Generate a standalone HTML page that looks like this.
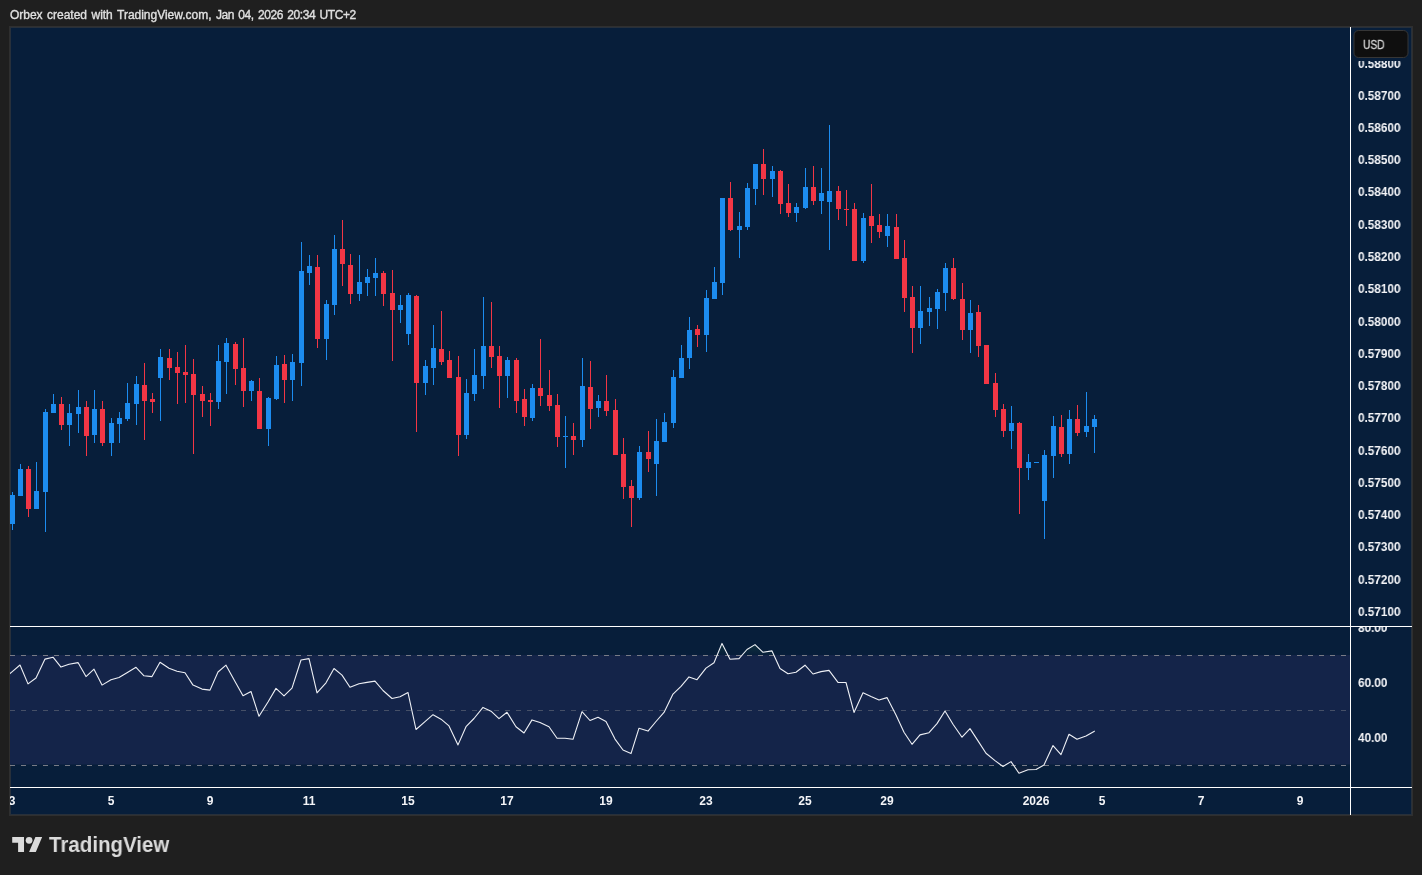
<!DOCTYPE html><html><head><meta charset="utf-8"><title>Chart</title><style>
html,body{margin:0;padding:0}
body{width:1422px;height:875px;background:#1f1f1f;position:relative;overflow:hidden;font-family:"Liberation Sans",sans-serif}
.t{position:absolute;white-space:nowrap;line-height:1;will-change:transform}
.hd{left:10px;top:9px;font-size:12px;color:#e0e0e0;word-spacing:1.2px;letter-spacing:-0.17px;-webkit-text-stroke:0.35px #e0e0e0}
.pl{font-size:13px;font-weight:bold;color:#f4f5f8;transform-origin:0 50%;transform:scaleX(0.905)}
.tl{font-size:12px;font-weight:bold;color:#f4f5f8;top:795px;transform:translateX(-50%)}
.usd{left:1363px;top:39px;font-size:12px;color:#d6d6d6;transform-origin:0 0;transform:scaleX(0.85);-webkit-text-stroke:0.3px #d6d6d6}
.tv{left:49.3px;top:834.9px;font-size:21.5px;font-weight:bold;color:#dbdbdb;transform-origin:0 0;transform:scaleX(0.953)}
.clip{position:absolute;overflow:hidden}

</style></head><body>
<svg width="1422" height="875" viewBox="0 0 1422 875" style="position:absolute;left:0;top:0">
<rect x="9" y="26" width="1404" height="790" fill="#2f2f2f"/>
<rect x="10" y="27" width="1402" height="788" fill="#27303b"/>
<rect x="11" y="28" width="1400" height="786" fill="#071e3a"/>
<rect x="10" y="655" width="1340" height="109.5" fill="#142449"/>
<line x1="10" y1="655.5" x2="1347" y2="655.5" stroke="#787b86" stroke-opacity="1" stroke-width="1" stroke-dasharray="5 6" shape-rendering="crispEdges"/>
<line x1="10" y1="710.5" x2="1347" y2="710.5" stroke="#787b86" stroke-opacity="0.5" stroke-width="1" stroke-dasharray="5 6" shape-rendering="crispEdges"/>
<line x1="10" y1="765.5" x2="1347" y2="765.5" stroke="#787b86" stroke-opacity="1" stroke-width="1" stroke-dasharray="5 6" shape-rendering="crispEdges"/>
<g shape-rendering="crispEdges">
<rect x="12" y="492" width="1" height="38" fill="#1c8cef"/>
<rect x="10" y="495" width="5" height="29" fill="#1c8cef"/>
<rect x="20" y="464" width="1" height="32" fill="#1c8cef"/>
<rect x="18" y="469" width="5" height="27" fill="#1c8cef"/>
<rect x="28" y="466" width="1" height="51" fill="#f23645"/>
<rect x="26" y="469" width="5" height="40" fill="#f23645"/>
<rect x="36" y="462" width="1" height="47" fill="#1c8cef"/>
<rect x="34" y="491" width="5" height="18" fill="#1c8cef"/>
<rect x="45" y="409" width="1" height="123" fill="#1c8cef"/>
<rect x="43" y="412" width="5" height="80" fill="#1c8cef"/>
<rect x="53" y="394" width="1" height="19" fill="#1c8cef"/>
<rect x="51" y="404" width="5" height="9" fill="#1c8cef"/>
<rect x="61" y="397" width="1" height="33" fill="#f23645"/>
<rect x="59" y="404" width="5" height="21" fill="#f23645"/>
<rect x="69" y="404" width="1" height="42" fill="#1c8cef"/>
<rect x="67" y="413" width="5" height="12" fill="#1c8cef"/>
<rect x="78" y="390" width="1" height="43" fill="#1c8cef"/>
<rect x="76" y="407" width="5" height="7" fill="#1c8cef"/>
<rect x="86" y="401" width="1" height="55" fill="#f23645"/>
<rect x="84" y="407" width="5" height="29" fill="#f23645"/>
<rect x="94" y="390" width="1" height="53" fill="#1c8cef"/>
<rect x="92" y="409" width="5" height="26" fill="#1c8cef"/>
<rect x="102" y="401" width="1" height="45" fill="#f23645"/>
<rect x="100" y="409" width="5" height="34" fill="#f23645"/>
<rect x="111" y="418" width="1" height="38" fill="#1c8cef"/>
<rect x="109" y="423" width="5" height="20" fill="#1c8cef"/>
<rect x="119" y="412" width="1" height="31" fill="#1c8cef"/>
<rect x="117" y="418" width="5" height="6" fill="#1c8cef"/>
<rect x="127" y="383" width="1" height="38" fill="#1c8cef"/>
<rect x="125" y="403" width="5" height="16" fill="#1c8cef"/>
<rect x="136" y="376" width="1" height="49" fill="#1c8cef"/>
<rect x="134" y="384" width="5" height="20" fill="#1c8cef"/>
<rect x="144" y="363" width="1" height="77" fill="#f23645"/>
<rect x="142" y="385" width="5" height="16" fill="#f23645"/>
<rect x="152" y="393" width="1" height="20" fill="#f23645"/>
<rect x="150" y="399" width="5" height="3" fill="#f23645"/>
<rect x="160" y="349" width="1" height="72" fill="#1c8cef"/>
<rect x="158" y="357" width="5" height="21" fill="#1c8cef"/>
<rect x="169" y="349" width="1" height="31" fill="#f23645"/>
<rect x="167" y="358" width="5" height="10" fill="#f23645"/>
<rect x="177" y="352" width="1" height="52" fill="#f23645"/>
<rect x="175" y="367" width="5" height="6" fill="#f23645"/>
<rect x="185" y="345" width="1" height="58" fill="#f23645"/>
<rect x="183" y="372" width="5" height="3" fill="#f23645"/>
<rect x="193" y="359" width="1" height="95" fill="#f23645"/>
<rect x="191" y="374" width="5" height="21" fill="#f23645"/>
<rect x="202" y="386" width="1" height="31" fill="#f23645"/>
<rect x="200" y="394" width="5" height="7" fill="#f23645"/>
<rect x="210" y="393" width="1" height="33" fill="#f23645"/>
<rect x="208" y="400" width="5" height="2" fill="#f23645"/>
<rect x="218" y="345" width="1" height="64" fill="#1c8cef"/>
<rect x="216" y="361" width="5" height="41" fill="#1c8cef"/>
<rect x="226" y="338" width="1" height="56" fill="#1c8cef"/>
<rect x="224" y="343" width="5" height="19" fill="#1c8cef"/>
<rect x="235" y="342" width="1" height="43" fill="#f23645"/>
<rect x="233" y="344" width="5" height="25" fill="#f23645"/>
<rect x="243" y="338" width="1" height="69" fill="#f23645"/>
<rect x="241" y="368" width="5" height="23" fill="#f23645"/>
<rect x="251" y="380" width="1" height="21" fill="#1c8cef"/>
<rect x="249" y="381" width="5" height="10" fill="#1c8cef"/>
<rect x="259" y="378" width="1" height="51" fill="#f23645"/>
<rect x="257" y="391" width="5" height="38" fill="#f23645"/>
<rect x="268" y="397" width="1" height="49" fill="#1c8cef"/>
<rect x="266" y="398" width="5" height="31" fill="#1c8cef"/>
<rect x="276" y="356" width="1" height="44" fill="#1c8cef"/>
<rect x="274" y="365" width="5" height="34" fill="#1c8cef"/>
<rect x="284" y="355" width="1" height="48" fill="#f23645"/>
<rect x="282" y="364" width="5" height="16" fill="#f23645"/>
<rect x="292" y="354" width="1" height="47" fill="#1c8cef"/>
<rect x="290" y="362" width="5" height="18" fill="#1c8cef"/>
<rect x="301" y="242" width="1" height="144" fill="#1c8cef"/>
<rect x="299" y="271" width="5" height="92" fill="#1c8cef"/>
<rect x="309" y="255" width="1" height="30" fill="#1c8cef"/>
<rect x="307" y="266" width="5" height="7" fill="#1c8cef"/>
<rect x="317" y="255" width="1" height="93" fill="#f23645"/>
<rect x="315" y="267" width="5" height="72" fill="#f23645"/>
<rect x="326" y="300" width="1" height="60" fill="#1c8cef"/>
<rect x="324" y="304" width="5" height="35" fill="#1c8cef"/>
<rect x="334" y="235" width="1" height="80" fill="#1c8cef"/>
<rect x="332" y="249" width="5" height="56" fill="#1c8cef"/>
<rect x="342" y="220" width="1" height="66" fill="#f23645"/>
<rect x="340" y="249" width="5" height="15" fill="#f23645"/>
<rect x="350" y="254" width="1" height="50" fill="#f23645"/>
<rect x="348" y="265" width="5" height="29" fill="#f23645"/>
<rect x="359" y="255" width="1" height="46" fill="#1c8cef"/>
<rect x="357" y="282" width="5" height="12" fill="#1c8cef"/>
<rect x="367" y="269" width="1" height="27" fill="#1c8cef"/>
<rect x="365" y="277" width="5" height="6" fill="#1c8cef"/>
<rect x="375" y="258" width="1" height="38" fill="#1c8cef"/>
<rect x="373" y="273" width="5" height="5" fill="#1c8cef"/>
<rect x="383" y="271" width="1" height="35" fill="#f23645"/>
<rect x="381" y="273" width="5" height="21" fill="#f23645"/>
<rect x="392" y="270" width="1" height="91" fill="#f23645"/>
<rect x="390" y="293" width="5" height="17" fill="#f23645"/>
<rect x="400" y="295" width="1" height="28" fill="#1c8cef"/>
<rect x="398" y="305" width="5" height="5" fill="#1c8cef"/>
<rect x="408" y="293" width="1" height="52" fill="#1c8cef"/>
<rect x="406" y="295" width="5" height="39" fill="#1c8cef"/>
<rect x="416" y="295" width="1" height="137" fill="#f23645"/>
<rect x="414" y="296" width="5" height="87" fill="#f23645"/>
<rect x="425" y="360" width="1" height="35" fill="#1c8cef"/>
<rect x="423" y="366" width="5" height="17" fill="#1c8cef"/>
<rect x="433" y="325" width="1" height="60" fill="#1c8cef"/>
<rect x="431" y="348" width="5" height="20" fill="#1c8cef"/>
<rect x="441" y="311" width="1" height="54" fill="#f23645"/>
<rect x="439" y="349" width="5" height="13" fill="#f23645"/>
<rect x="449" y="351" width="1" height="27" fill="#f23645"/>
<rect x="447" y="360" width="5" height="18" fill="#f23645"/>
<rect x="458" y="356" width="1" height="100" fill="#f23645"/>
<rect x="456" y="377" width="5" height="58" fill="#f23645"/>
<rect x="466" y="379" width="1" height="60" fill="#1c8cef"/>
<rect x="464" y="393" width="5" height="42" fill="#1c8cef"/>
<rect x="474" y="349" width="1" height="52" fill="#1c8cef"/>
<rect x="472" y="375" width="5" height="19" fill="#1c8cef"/>
<rect x="483" y="297" width="1" height="92" fill="#1c8cef"/>
<rect x="481" y="346" width="5" height="30" fill="#1c8cef"/>
<rect x="491" y="302" width="1" height="66" fill="#f23645"/>
<rect x="489" y="346" width="5" height="11" fill="#f23645"/>
<rect x="499" y="346" width="1" height="62" fill="#f23645"/>
<rect x="497" y="356" width="5" height="20" fill="#f23645"/>
<rect x="507" y="357" width="1" height="41" fill="#1c8cef"/>
<rect x="505" y="360" width="5" height="16" fill="#1c8cef"/>
<rect x="516" y="358" width="1" height="55" fill="#f23645"/>
<rect x="514" y="360" width="5" height="41" fill="#f23645"/>
<rect x="524" y="389" width="1" height="37" fill="#f23645"/>
<rect x="522" y="399" width="5" height="18" fill="#f23645"/>
<rect x="532" y="384" width="1" height="37" fill="#1c8cef"/>
<rect x="530" y="388" width="5" height="30" fill="#1c8cef"/>
<rect x="540" y="339" width="1" height="67" fill="#f23645"/>
<rect x="538" y="388" width="5" height="8" fill="#f23645"/>
<rect x="549" y="370" width="1" height="41" fill="#f23645"/>
<rect x="547" y="395" width="5" height="11" fill="#f23645"/>
<rect x="557" y="394" width="1" height="53" fill="#f23645"/>
<rect x="555" y="405" width="5" height="32" fill="#f23645"/>
<rect x="565" y="416" width="1" height="52" fill="#1c8cef"/>
<rect x="563" y="436" width="5" height="1" fill="#1c8cef"/>
<rect x="573" y="423" width="1" height="32" fill="#f23645"/>
<rect x="571" y="436" width="5" height="4" fill="#f23645"/>
<rect x="582" y="358" width="1" height="89" fill="#1c8cef"/>
<rect x="580" y="386" width="5" height="54" fill="#1c8cef"/>
<rect x="590" y="361" width="1" height="68" fill="#f23645"/>
<rect x="588" y="387" width="5" height="22" fill="#f23645"/>
<rect x="598" y="395" width="1" height="22" fill="#1c8cef"/>
<rect x="596" y="401" width="5" height="7" fill="#1c8cef"/>
<rect x="606" y="375" width="1" height="41" fill="#f23645"/>
<rect x="604" y="401" width="5" height="10" fill="#f23645"/>
<rect x="615" y="399" width="1" height="56" fill="#f23645"/>
<rect x="613" y="410" width="5" height="45" fill="#f23645"/>
<rect x="623" y="438" width="1" height="61" fill="#f23645"/>
<rect x="621" y="454" width="5" height="33" fill="#f23645"/>
<rect x="631" y="480" width="1" height="47" fill="#f23645"/>
<rect x="629" y="486" width="5" height="12" fill="#f23645"/>
<rect x="639" y="446" width="1" height="54" fill="#1c8cef"/>
<rect x="637" y="452" width="5" height="46" fill="#1c8cef"/>
<rect x="648" y="431" width="1" height="41" fill="#f23645"/>
<rect x="646" y="452" width="5" height="7" fill="#f23645"/>
<rect x="656" y="419" width="1" height="77" fill="#1c8cef"/>
<rect x="654" y="441" width="5" height="23" fill="#1c8cef"/>
<rect x="664" y="413" width="1" height="29" fill="#1c8cef"/>
<rect x="662" y="422" width="5" height="20" fill="#1c8cef"/>
<rect x="673" y="370" width="1" height="58" fill="#1c8cef"/>
<rect x="671" y="377" width="5" height="46" fill="#1c8cef"/>
<rect x="681" y="345" width="1" height="33" fill="#1c8cef"/>
<rect x="679" y="358" width="5" height="20" fill="#1c8cef"/>
<rect x="689" y="317" width="1" height="52" fill="#1c8cef"/>
<rect x="687" y="330" width="5" height="28" fill="#1c8cef"/>
<rect x="697" y="325" width="1" height="22" fill="#f23645"/>
<rect x="695" y="329" width="5" height="6" fill="#f23645"/>
<rect x="706" y="290" width="1" height="62" fill="#1c8cef"/>
<rect x="704" y="298" width="5" height="37" fill="#1c8cef"/>
<rect x="714" y="267" width="1" height="32" fill="#1c8cef"/>
<rect x="712" y="282" width="5" height="17" fill="#1c8cef"/>
<rect x="722" y="198" width="1" height="97" fill="#1c8cef"/>
<rect x="720" y="198" width="5" height="85" fill="#1c8cef"/>
<rect x="730" y="182" width="1" height="49" fill="#f23645"/>
<rect x="728" y="198" width="5" height="32" fill="#f23645"/>
<rect x="739" y="212" width="1" height="46" fill="#1c8cef"/>
<rect x="737" y="226" width="5" height="4" fill="#1c8cef"/>
<rect x="747" y="183" width="1" height="47" fill="#1c8cef"/>
<rect x="745" y="188" width="5" height="39" fill="#1c8cef"/>
<rect x="755" y="164" width="1" height="41" fill="#1c8cef"/>
<rect x="753" y="164" width="5" height="25" fill="#1c8cef"/>
<rect x="763" y="149" width="1" height="46" fill="#f23645"/>
<rect x="761" y="164" width="5" height="15" fill="#f23645"/>
<rect x="772" y="166" width="1" height="31" fill="#1c8cef"/>
<rect x="770" y="171" width="5" height="8" fill="#1c8cef"/>
<rect x="780" y="170" width="1" height="44" fill="#f23645"/>
<rect x="778" y="171" width="5" height="33" fill="#f23645"/>
<rect x="788" y="184" width="1" height="33" fill="#f23645"/>
<rect x="786" y="203" width="5" height="10" fill="#f23645"/>
<rect x="796" y="203" width="1" height="19" fill="#1c8cef"/>
<rect x="794" y="207" width="5" height="6" fill="#1c8cef"/>
<rect x="805" y="168" width="1" height="41" fill="#1c8cef"/>
<rect x="803" y="187" width="5" height="21" fill="#1c8cef"/>
<rect x="813" y="166" width="1" height="39" fill="#f23645"/>
<rect x="811" y="187" width="5" height="14" fill="#f23645"/>
<rect x="821" y="168" width="1" height="46" fill="#1c8cef"/>
<rect x="819" y="193" width="5" height="8" fill="#1c8cef"/>
<rect x="829" y="125" width="1" height="125" fill="#1c8cef"/>
<rect x="827" y="191" width="5" height="11" fill="#1c8cef"/>
<rect x="838" y="186" width="1" height="34" fill="#f23645"/>
<rect x="836" y="191" width="5" height="18" fill="#f23645"/>
<rect x="846" y="190" width="1" height="36" fill="#f23645"/>
<rect x="844" y="209" width="5" height="1" fill="#f23645"/>
<rect x="854" y="203" width="1" height="58" fill="#f23645"/>
<rect x="852" y="209" width="5" height="52" fill="#f23645"/>
<rect x="863" y="213" width="1" height="50" fill="#1c8cef"/>
<rect x="861" y="218" width="5" height="43" fill="#1c8cef"/>
<rect x="871" y="184" width="1" height="59" fill="#f23645"/>
<rect x="869" y="216" width="5" height="10" fill="#f23645"/>
<rect x="879" y="214" width="1" height="24" fill="#f23645"/>
<rect x="877" y="225" width="5" height="7" fill="#f23645"/>
<rect x="887" y="214" width="1" height="33" fill="#1c8cef"/>
<rect x="885" y="226" width="5" height="10" fill="#1c8cef"/>
<rect x="896" y="214" width="1" height="45" fill="#f23645"/>
<rect x="894" y="227" width="5" height="32" fill="#f23645"/>
<rect x="904" y="240" width="1" height="72" fill="#f23645"/>
<rect x="902" y="258" width="5" height="40" fill="#f23645"/>
<rect x="912" y="286" width="1" height="67" fill="#f23645"/>
<rect x="910" y="297" width="5" height="31" fill="#f23645"/>
<rect x="920" y="286" width="1" height="58" fill="#1c8cef"/>
<rect x="918" y="311" width="5" height="17" fill="#1c8cef"/>
<rect x="929" y="297" width="1" height="29" fill="#1c8cef"/>
<rect x="927" y="308" width="5" height="4" fill="#1c8cef"/>
<rect x="937" y="289" width="1" height="40" fill="#1c8cef"/>
<rect x="935" y="292" width="5" height="17" fill="#1c8cef"/>
<rect x="945" y="263" width="1" height="48" fill="#1c8cef"/>
<rect x="943" y="268" width="5" height="25" fill="#1c8cef"/>
<rect x="953" y="258" width="1" height="42" fill="#f23645"/>
<rect x="951" y="268" width="5" height="31" fill="#f23645"/>
<rect x="962" y="283" width="1" height="57" fill="#f23645"/>
<rect x="960" y="299" width="5" height="31" fill="#f23645"/>
<rect x="970" y="300" width="1" height="53" fill="#1c8cef"/>
<rect x="968" y="313" width="5" height="17" fill="#1c8cef"/>
<rect x="978" y="305" width="1" height="52" fill="#f23645"/>
<rect x="976" y="312" width="5" height="34" fill="#f23645"/>
<rect x="986" y="345" width="1" height="39" fill="#f23645"/>
<rect x="984" y="345" width="5" height="39" fill="#f23645"/>
<rect x="995" y="373" width="1" height="44" fill="#f23645"/>
<rect x="993" y="383" width="5" height="27" fill="#f23645"/>
<rect x="1003" y="404" width="1" height="33" fill="#f23645"/>
<rect x="1001" y="409" width="5" height="22" fill="#f23645"/>
<rect x="1011" y="406" width="1" height="43" fill="#1c8cef"/>
<rect x="1009" y="423" width="5" height="8" fill="#1c8cef"/>
<rect x="1019" y="422" width="1" height="92" fill="#f23645"/>
<rect x="1017" y="423" width="5" height="45" fill="#f23645"/>
<rect x="1028" y="454" width="1" height="26" fill="#1c8cef"/>
<rect x="1026" y="462" width="5" height="6" fill="#1c8cef"/>
<rect x="1036" y="462" width="1" height="1" fill="#1c8cef"/>
<rect x="1034" y="462" width="5" height="1" fill="#1c8cef"/>
<rect x="1044" y="450" width="1" height="89" fill="#1c8cef"/>
<rect x="1042" y="455" width="5" height="46" fill="#1c8cef"/>
<rect x="1053" y="416" width="1" height="62" fill="#1c8cef"/>
<rect x="1051" y="426" width="5" height="30" fill="#1c8cef"/>
<rect x="1061" y="415" width="1" height="42" fill="#f23645"/>
<rect x="1059" y="427" width="5" height="27" fill="#f23645"/>
<rect x="1069" y="410" width="1" height="54" fill="#1c8cef"/>
<rect x="1067" y="419" width="5" height="35" fill="#1c8cef"/>
<rect x="1077" y="405" width="1" height="31" fill="#f23645"/>
<rect x="1075" y="419" width="5" height="14" fill="#f23645"/>
<rect x="1086" y="392" width="1" height="45" fill="#1c8cef"/>
<rect x="1084" y="426" width="5" height="6" fill="#1c8cef"/>
<rect x="1094" y="415" width="1" height="38" fill="#1c8cef"/>
<rect x="1092" y="419" width="5" height="8" fill="#1c8cef"/>
</g>
<clipPath id="cp"><rect x="10" y="628" width="1340" height="159"/></clipPath>
<defs><linearGradient id="gob" gradientUnits="userSpaceOnUse" x1="0" y1="573" x2="0" y2="655"><stop offset="0" stop-color="#4caf50" stop-opacity="1"/><stop offset="1" stop-color="#4caf50" stop-opacity="0"/></linearGradient><linearGradient id="gos" gradientUnits="userSpaceOnUse" x1="0" y1="765" x2="0" y2="848"><stop offset="0" stop-color="#ff5252" stop-opacity="0"/><stop offset="1" stop-color="#ff5252" stop-opacity="1"/></linearGradient><clipPath id="cob"><rect x="10" y="628" width="1340" height="27"/></clipPath><clipPath id="cos"><rect x="10" y="766" width="1340" height="21"/></clipPath></defs>
<polygon points="3.0,655 3.0,679.2 12.0,671.8 20.0,665.0 28.0,683.9 36.0,678.0 45.0,659.1 53.0,657.2 61.0,667.1 69.0,664.3 78.0,662.6 86.0,676.6 94.0,669.2 102.0,685.1 111.0,679.7 119.0,677.5 127.0,672.7 136.0,667.3 144.0,675.8 152.0,676.6 160.0,662.3 169.0,668.2 177.0,671.3 185.0,672.7 193.0,685.1 202.0,689.1 210.0,690.1 218.0,672.0 226.0,665.2 235.0,681.4 243.0,695.8 251.0,691.5 259.0,716.3 268.0,702.0 276.0,688.4 284.0,695.8 292.0,688.2 301.0,660.0 309.0,658.6 317.0,692.9 326.0,682.8 334.0,668.5 342.0,675.1 350.0,687.3 359.0,683.8 367.0,682.4 375.0,681.1 383.0,690.5 392.0,698.5 400.0,696.8 408.0,692.6 416.0,729.5 425.0,721.6 433.0,714.7 441.0,719.2 449.0,725.9 458.0,744.9 466.0,726.7 474.0,718.5 483.0,707.4 491.0,711.2 499.0,718.6 507.0,712.3 516.0,726.7 524.0,733.0 532.0,719.9 540.0,722.4 549.0,726.7 557.0,738.2 565.0,738.3 573.0,739.3 582.0,711.7 590.0,720.5 598.0,717.3 606.0,721.5 615.0,739.1 623.0,750.0 631.0,753.6 639.0,728.2 648.0,731.1 656.0,721.5 664.0,712.4 673.0,694.1 681.0,686.3 689.0,676.9 697.0,679.7 706.0,668.1 714.0,662.7 722.0,643.4 730.0,659.3 739.0,658.6 747.0,649.5 755.0,644.6 763.0,652.3 772.0,650.9 780.0,668.5 788.0,673.7 796.0,672.3 805.0,665.2 813.0,674.0 821.0,671.6 829.0,670.4 838.0,682.4 846.0,682.5 854.0,712.4 863.0,692.7 871.0,696.5 879.0,700.0 887.0,697.6 896.0,714.9 904.0,732.3 912.0,744.3 920.0,734.9 929.0,732.7 937.0,723.6 945.0,711.0 953.0,724.2 962.0,737.2 970.0,728.6 978.0,740.9 986.0,753.3 995.0,760.6 1003.0,766.5 1011.0,761.6 1019.0,773.3 1028.0,769.8 1036.0,769.5 1044.0,764.9 1053.0,745.6 1061.0,754.6 1069.0,734.3 1077.0,739.3 1086.0,736.0 1094.0,731.4 1094.8,731.1 1094.0,655" fill="url(#gob)" clip-path="url(#cob)"/>
<polygon points="3.0,766 3.0,679.2 12.0,671.8 20.0,665.0 28.0,683.9 36.0,678.0 45.0,659.1 53.0,657.2 61.0,667.1 69.0,664.3 78.0,662.6 86.0,676.6 94.0,669.2 102.0,685.1 111.0,679.7 119.0,677.5 127.0,672.7 136.0,667.3 144.0,675.8 152.0,676.6 160.0,662.3 169.0,668.2 177.0,671.3 185.0,672.7 193.0,685.1 202.0,689.1 210.0,690.1 218.0,672.0 226.0,665.2 235.0,681.4 243.0,695.8 251.0,691.5 259.0,716.3 268.0,702.0 276.0,688.4 284.0,695.8 292.0,688.2 301.0,660.0 309.0,658.6 317.0,692.9 326.0,682.8 334.0,668.5 342.0,675.1 350.0,687.3 359.0,683.8 367.0,682.4 375.0,681.1 383.0,690.5 392.0,698.5 400.0,696.8 408.0,692.6 416.0,729.5 425.0,721.6 433.0,714.7 441.0,719.2 449.0,725.9 458.0,744.9 466.0,726.7 474.0,718.5 483.0,707.4 491.0,711.2 499.0,718.6 507.0,712.3 516.0,726.7 524.0,733.0 532.0,719.9 540.0,722.4 549.0,726.7 557.0,738.2 565.0,738.3 573.0,739.3 582.0,711.7 590.0,720.5 598.0,717.3 606.0,721.5 615.0,739.1 623.0,750.0 631.0,753.6 639.0,728.2 648.0,731.1 656.0,721.5 664.0,712.4 673.0,694.1 681.0,686.3 689.0,676.9 697.0,679.7 706.0,668.1 714.0,662.7 722.0,643.4 730.0,659.3 739.0,658.6 747.0,649.5 755.0,644.6 763.0,652.3 772.0,650.9 780.0,668.5 788.0,673.7 796.0,672.3 805.0,665.2 813.0,674.0 821.0,671.6 829.0,670.4 838.0,682.4 846.0,682.5 854.0,712.4 863.0,692.7 871.0,696.5 879.0,700.0 887.0,697.6 896.0,714.9 904.0,732.3 912.0,744.3 920.0,734.9 929.0,732.7 937.0,723.6 945.0,711.0 953.0,724.2 962.0,737.2 970.0,728.6 978.0,740.9 986.0,753.3 995.0,760.6 1003.0,766.5 1011.0,761.6 1019.0,773.3 1028.0,769.8 1036.0,769.5 1044.0,764.9 1053.0,745.6 1061.0,754.6 1069.0,734.3 1077.0,739.3 1086.0,736.0 1094.0,731.4 1094.8,731.1 1094.0,766" fill="url(#gos)" clip-path="url(#cos)"/>
<polyline points="3.0,679.2 12.0,671.8 20.0,665.0 28.0,683.9 36.0,678.0 45.0,659.1 53.0,657.2 61.0,667.1 69.0,664.3 78.0,662.6 86.0,676.6 94.0,669.2 102.0,685.1 111.0,679.7 119.0,677.5 127.0,672.7 136.0,667.3 144.0,675.8 152.0,676.6 160.0,662.3 169.0,668.2 177.0,671.3 185.0,672.7 193.0,685.1 202.0,689.1 210.0,690.1 218.0,672.0 226.0,665.2 235.0,681.4 243.0,695.8 251.0,691.5 259.0,716.3 268.0,702.0 276.0,688.4 284.0,695.8 292.0,688.2 301.0,660.0 309.0,658.6 317.0,692.9 326.0,682.8 334.0,668.5 342.0,675.1 350.0,687.3 359.0,683.8 367.0,682.4 375.0,681.1 383.0,690.5 392.0,698.5 400.0,696.8 408.0,692.6 416.0,729.5 425.0,721.6 433.0,714.7 441.0,719.2 449.0,725.9 458.0,744.9 466.0,726.7 474.0,718.5 483.0,707.4 491.0,711.2 499.0,718.6 507.0,712.3 516.0,726.7 524.0,733.0 532.0,719.9 540.0,722.4 549.0,726.7 557.0,738.2 565.0,738.3 573.0,739.3 582.0,711.7 590.0,720.5 598.0,717.3 606.0,721.5 615.0,739.1 623.0,750.0 631.0,753.6 639.0,728.2 648.0,731.1 656.0,721.5 664.0,712.4 673.0,694.1 681.0,686.3 689.0,676.9 697.0,679.7 706.0,668.1 714.0,662.7 722.0,643.4 730.0,659.3 739.0,658.6 747.0,649.5 755.0,644.6 763.0,652.3 772.0,650.9 780.0,668.5 788.0,673.7 796.0,672.3 805.0,665.2 813.0,674.0 821.0,671.6 829.0,670.4 838.0,682.4 846.0,682.5 854.0,712.4 863.0,692.7 871.0,696.5 879.0,700.0 887.0,697.6 896.0,714.9 904.0,732.3 912.0,744.3 920.0,734.9 929.0,732.7 937.0,723.6 945.0,711.0 953.0,724.2 962.0,737.2 970.0,728.6 978.0,740.9 986.0,753.3 995.0,760.6 1003.0,766.5 1011.0,761.6 1019.0,773.3 1028.0,769.8 1036.0,769.5 1044.0,764.9 1053.0,745.6 1061.0,754.6 1069.0,734.3 1077.0,739.3 1086.0,736.0 1094.0,731.4 1094.8,731.1" fill="none" stroke="#eef0f5" stroke-width="1.1" stroke-linejoin="round" clip-path="url(#cp)"/>
<g shape-rendering="crispEdges" fill="#ffffff">
<rect x="10" y="626" width="1402" height="1"/>
<rect x="10" y="787" width="1402" height="1"/>
<rect x="1350" y="27" width="1" height="788"/>
</g>
<rect x="1351" y="28" width="60" height="33" fill="#071e3a"/>
<rect x="1354" y="30.5" width="54" height="27" rx="4.5" fill="#0f0f0f" stroke="#363636" stroke-width="1"/>
<g transform="translate(12.2,833.5) scale(0.844)" fill="#dbdbdb"><path d="M14 22H7V11H0V4h14v18zM28 22h-8l7.5-18h8L28 22z"/><circle cx="20" cy="8" r="4"/></g>
</svg>
<div class="t hd"><span style="letter-spacing:-0.02px">Orbex created with TradingView.com, </span><span style="letter-spacing:-0.39px">Jan 04, 2026 20:34 UTC+2</span></div>
<div class="clip" style="left:1351px;top:61px;width:61px;height:565px">
<div class="t pl" style="left:7.1px;top:-4.0px">0.58800</div>
<div class="t pl" style="left:7.1px;top:27.5px">0.58700</div>
<div class="t pl" style="left:7.1px;top:59.8px">0.58600</div>
<div class="t pl" style="left:7.1px;top:92.1px">0.58500</div>
<div class="t pl" style="left:7.1px;top:124.3px">0.58400</div>
<div class="t pl" style="left:7.1px;top:156.6px">0.58300</div>
<div class="t pl" style="left:7.1px;top:188.9px">0.58200</div>
<div class="t pl" style="left:7.1px;top:221.2px">0.58100</div>
<div class="t pl" style="left:7.1px;top:253.5px">0.58000</div>
<div class="t pl" style="left:7.1px;top:285.7px">0.57900</div>
<div class="t pl" style="left:7.1px;top:318.0px">0.57800</div>
<div class="t pl" style="left:7.1px;top:350.3px">0.57700</div>
<div class="t pl" style="left:7.1px;top:382.6px">0.57600</div>
<div class="t pl" style="left:7.1px;top:414.9px">0.57500</div>
<div class="t pl" style="left:7.1px;top:447.1px">0.57400</div>
<div class="t pl" style="left:7.1px;top:479.4px">0.57300</div>
<div class="t pl" style="left:7.1px;top:511.7px">0.57200</div>
<div class="t pl" style="left:7.1px;top:544.0px">0.57100</div>
</div>
<div class="clip" style="left:1351px;top:627px;width:61px;height:160px">
<div class="t pl" style="left:7.1px;top:-6.2px">80.00</div>
<div class="t pl" style="left:7.1px;top:48.9px">60.00</div>
<div class="t pl" style="left:7.1px;top:103.7px">40.00</div>
</div>
<div class="clip" style="left:10px;top:788px;width:1340px;height:27px">
<div class="t tl" style="left:2.2px;top:7px">3</div>
<div class="t tl" style="left:101.2px;top:7px">5</div>
<div class="t tl" style="left:200.2px;top:7px">9</div>
<div class="t tl" style="left:299.2px;top:7px">11</div>
<div class="t tl" style="left:398.2px;top:7px">15</div>
<div class="t tl" style="left:497.2px;top:7px">17</div>
<div class="t tl" style="left:596.2px;top:7px">19</div>
<div class="t tl" style="left:696.2px;top:7px">23</div>
<div class="t tl" style="left:795.2px;top:7px">25</div>
<div class="t tl" style="left:877.2px;top:7px">29</div>
<div class="t tl" style="left:1026.2px;top:7px">2026</div>
<div class="t tl" style="left:1092.2px;top:7px">5</div>
<div class="t tl" style="left:1191.2px;top:7px">7</div>
<div class="t tl" style="left:1290.2px;top:7px">9</div>
</div>
<div class="t usd">USD</div>
<div class="t tv">TradingView</div>
</body></html>
